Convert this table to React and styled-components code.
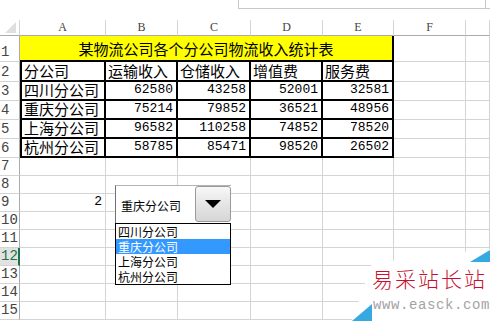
import React from "react"
import styled, { createGlobalStyle } from "styled-components"

const GlobalStyle = createGlobalStyle`
  html, body {
    margin: 0;
    padding: 0;
    background: #fff;
    overflow: hidden;
  }
`

const CJK = `"Noto Sans CJK SC", "Noto Sans", sans-serif`
const MONO = `"Liberation Mono", "DejaVu Sans Mono", monospace`
const GRID = "#d4d4d4"

const Sheet = styled.div`
  position: relative;
  width: 490px;
  height: 321px;
  overflow: hidden;
  background: #fff;
`

const TopBar = styled.div`
  height: 20px;
  display: flex;
  justify-content: flex-end;
`

const FormulaBox = styled.div`
  width: 251px;
  height: 8px;
  border-left: 1px solid #c8c8c8;
  border-bottom: 1px solid #c8c8c8;
  display: flex;
  justify-content: flex-end;
  & > span {
    width: 4px;
    border-left: 1px solid #c8c8c8;
  }
`

const Grid = styled.div`
  display: grid;
  grid-template-columns: 20px 86px 72px 73px 72px 71px 72px 24px;
  grid-template-rows: 16px 26px 20px 19px 19px 19px 19px repeat(9, 18px);
`

const Corner = styled.div`
  position: relative;
  border-right: 1px solid ${GRID};
  border-bottom: 1px solid #ababab;
  &::after {
    content: "";
    position: absolute;
    right: 3px;
    bottom: 2px;
    border-style: solid;
    border-width: 0 0 11px 11px;
    border-color: transparent transparent #dfdfdf transparent;
  }
`

const ColHead = styled.div`
  display: flex;
  align-items: center;
  justify-content: center;
  border-right: 1px solid ${GRID};
  border-bottom: 1px solid #ababab;
  font-family: "Liberation Serif", serif;
  font-size: 12px;
  color: #444;
`

const RowHead = styled.div`
  display: flex;
  align-items: flex-end;
  padding: 0 0 1px 1px;
  box-sizing: border-box;
  border-bottom: 1px solid ${GRID};
  border-right: ${({ $active }) => ($active ? "2px solid #217346" : "1px solid #ababab")};
  background: ${({ $active }) => ($active ? "#e2e2e2" : "#fff")};
  color: ${({ $active }) => ($active ? "#217346" : "#444")};
  font-family: ${MONO};
  font-size: 14px;
  line-height: 15px;
`

const Cell = styled.div`
  display: flex;
  align-items: flex-end;
  justify-content: ${({ $num }) => ($num ? "flex-end" : "flex-start")};
  box-sizing: border-box;
  padding: ${({ $num }) => ($num ? "0 3px 1px 0" : "0 0 1px 2px")};
  border-right: ${({ $thick }) => ($thick ? "2px solid #000" : `1px solid ${GRID}`)};
  border-bottom: ${({ $thick }) => ($thick ? "2px solid #000" : `1px solid ${GRID}`)};
  border-left: ${({ $left }) => ($left ? "2px solid #000" : "none")};
  font-family: ${({ $num }) => ($num ? MONO : CJK)};
  font-size: ${({ $num }) => ($num ? "13px" : "15px")};
  line-height: 17px;
  color: #000;
  white-space: nowrap;
`

const TitleCell = styled.div`
  grid-column: span 5;
  display: flex;
  align-items: flex-end;
  justify-content: center;
  box-sizing: border-box;
  padding-bottom: 2px;
  background: #ffff00;
  border-right: 2px solid #000;
  border-bottom: 2px solid #000;
  font-family: ${CJK};
  font-size: 15px;
  line-height: 18px;
  color: #000;
`

const Combo = styled.div`
  position: absolute;
  left: 115px;
  top: 185px;
  width: 116px;
  height: 38px;
  display: flex;
  box-sizing: border-box;
  border-top: 1px solid #b4b4b4;
  border-left: 1px solid #707070;
  background: #fff;
`

const ComboText = styled.div`
  flex: 1;
  display: flex;
  align-items: center;
  padding-left: 5px;
  padding-top: 1px;
  font-family: ${CJK};
  font-size: 12px;
  color: #000;
`

const ComboButton = styled.div`
  width: 36px;
  height: 36px;
  box-sizing: border-box;
  border: 1px solid #9a9a9a;
  border-radius: 3px;
  background: linear-gradient(#f7f7f7, #e4e4e4 55%, #d6d6d6);
  display: flex;
  align-items: center;
  justify-content: center;
  &::after {
    content: "";
    border-style: solid;
    border-width: 8px 8px 0 8px;
    border-color: #000 transparent transparent transparent;
  }
`

const List = styled.ul`
  position: absolute;
  left: 115px;
  top: 223px;
  width: 116px;
  margin: 0;
  padding: 0;
  box-sizing: border-box;
  list-style: none;
  border: 1px solid #000;
  background: #fff;
`

const Item = styled.li`
  height: 15px;
  padding-left: 2px;
  font-family: ${CJK};
  font-size: 12px;
  line-height: 15px;
  color: ${({ $selected }) => ($selected ? "#fff" : "#000")};
  background: ${({ $selected }) => ($selected ? "#3399ff" : "transparent")};
`

const Mark = styled.div`
  position: absolute;
  left: 352px;
  top: 247px;
  width: 138px;
  height: 74px;
`

const MarkBg = styled.svg`
  position: absolute;
  inset: 0;
`

const MarkTitle = styled.div`
  position: absolute;
  left: 20px;
  top: 16px;
  white-space: nowrap;
  font-family: ${CJK};
  font-size: 21px;
  font-weight: 300;
  letter-spacing: 2px;
  color: #c8102e;
`

const MarkUrl = styled.div`
  position: absolute;
  left: 21px;
  top: 50px;
  white-space: nowrap;
  font-family: ${MONO};
  font-size: 14px;
  letter-spacing: 0.6px;
  color: #a4a4a4;
`

const COLS = ["A", "B", "C", "D", "E", "F", "G"]

const DATA = {
  2: ["分公司", "运输收入", "仓储收入", "增值费", "服务费"],
  3: ["四川分公司", "62580", "43258", "52001", "32581"],
  4: ["重庆分公司", "75214", "79852", "36521", "48956"],
  5: ["上海分公司", "96582", "110258", "74852", "78520"],
  6: ["杭州分公司", "58785", "85471", "98520", "26502"],
  9: ["2"]
}

const OPTIONS = ["四川分公司", "重庆分公司", "上海分公司", "杭州分公司"]

const isNum = v => /^\d+$/.test(v)

const Row = ({ r }) => {
  const values = DATA[r] || []
  const inTable = r >= 2 && r <= 6
  return (
    <>
      <RowHead $active={r === 12}>{r}</RowHead>
      {r === 1 ? (
        <>
          <TitleCell>某物流公司各个分公司物流收入统计表</TitleCell>
          <Cell />
          <Cell />
        </>
      ) : (
        COLS.map((c, i) => {
          const v = values[i]
          return (
            <Cell
              key={c}
              $thick={inTable && i < 5}
              $left={inTable && i === 0}
              $num={v && isNum(v)}
            >
              {v}
            </Cell>
          )
        })
      )}
    </>
  )
}

export default function App() {
  const rows = Array.from({ length: 15 }, (_, i) => i + 1)
  return (
    <>
      <GlobalStyle />
      <Sheet>
        <TopBar>
          <FormulaBox>
            <span />
          </FormulaBox>
        </TopBar>
        <Grid>
          <Corner />
          {COLS.map(c => (
            <ColHead key={c}>{c === "G" ? "" : c}</ColHead>
          ))}
          {rows.map(r => (
            <Row key={r} r={r} />
          ))}
        </Grid>

        <Combo>
          <ComboText>重庆分公司</ComboText>
          <ComboButton />
        </Combo>
        <List>
          {OPTIONS.map((o, i) => (
            <Item key={o} $selected={i === 1}>
              {o}
            </Item>
          ))}
        </List>

        <Mark>
          <MarkBg width="138" height="74" viewBox="0 0 138 74">
            <polygon points="0,74 20,16 138,2 138,74" fill="#fff" />
            <polygon points="0,74 20,74 20,57" fill="#36a9e1" />
            <polygon points="118,15 138,3 138,15" fill="#36a9e1" />
          </MarkBg>
          <MarkTitle>易采站长站</MarkTitle>
          <MarkUrl>www.easck.com</MarkUrl>
        </Mark>
      </Sheet>
    </>
  )
}
